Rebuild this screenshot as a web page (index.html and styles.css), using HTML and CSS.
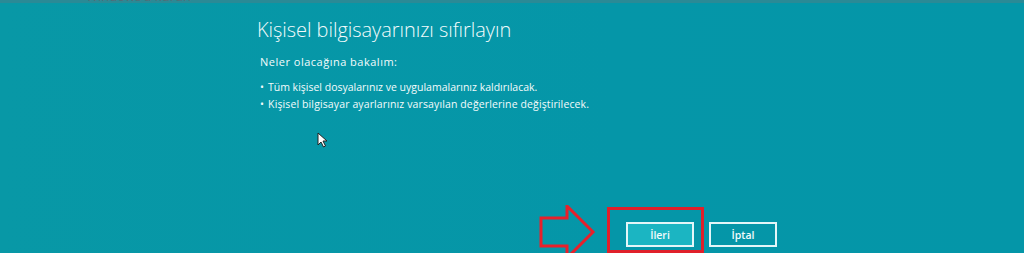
FILE: index.html
```html
<!DOCTYPE html>
<html lang="tr">
<head>
<meta charset="utf-8">
<link rel="stylesheet" href="styles.css">
</head>
<body>
<div class="screen">
  <div class="topstrip"><span class="toptext">Windows’u kurun</span></div>
  <main class="content">
    <h1 class="title">Kişisel bilgisayarınızı sıfırlayın</h1>
    <p class="intro">Neler olacağına bakalım:</p>
    <ul class="list">
      <li>Tüm kişisel dosyalarınız ve uygulamalarınız kaldırılacak.</li>
      <li>Kişisel bilgisayar ayarlarınız varsayılan değerlerine değiştirilecek.</li>
    </ul>
  </main>
  <div class="actions">
    <button class="btn btn-primary">İleri</button>
    <button class="btn">İptal</button>
  </div>
  <svg class="cursor" width="12" height="16" viewBox="0 0 12 16">
    <path d="M1 1 L1 13 L4 10 L6.5 15 L8.5 14 L6 9 L10 9 Z" fill="#fff" stroke="#222" stroke-width="1"/>
  </svg>
  <svg class="arrow" width="60" height="56" viewBox="0 0 60 56">
    <path d="M2 13 L28 13 L28 1 L54 27 L28 53 L28 41 L2 41 Z" fill="none" stroke="#e8202a" stroke-width="3" stroke-linejoin="miter"/>
  </svg>
  <div class="highlight"></div>
</div>
</body>
</html>
```

FILE: styles.css
```css
* { box-sizing: border-box; }
html, body { margin: 0; padding: 0; }
body {
  width: 1024px;
  height: 253px;
  overflow: hidden;
  background: #0596a8;
  font-family: "Open Sans", "Noto Sans", sans-serif;
  color: #f4fbfc;
}
.screen {
  position: relative;
  width: 1024px;
  height: 253px;
  display: flex;
  flex-direction: column;
  background: linear-gradient(90deg, #0898a6 0%, #0596a8 60%, #0496a8 100%);
}
.topstrip {
  height: 3px;
  background: #2a8a96;
  position: relative;
  overflow: hidden;
}
.toptext {
  position: absolute;
  left: 86px;
  top: -10px;
  font-size: 13px;
  color: #4e6e78;
  line-height: 13px;
}
.content {
  padding: 14px 0 0 257px;
}
.title {
  margin: 0;
  font-weight: 300;
  font-size: 20px;
  line-height: 26px;
  letter-spacing: -0.05px;
  color: #f2fbfc;
}
.intro {
  margin: 12px 0 0 3px;
  font-size: 11px;
  line-height: 14px;
  letter-spacing: 0.5px;
}
.list {
  list-style: none;
  margin: 10px 0 0 3px;
  padding: 0;
  font-size: 10.5px;
  line-height: 17px;
}
.list li::before {
  content: "•";
  margin-right: 4px;
}
.list li + li {
  letter-spacing: 0.12px;
}
.actions {
  margin-top: auto;
  display: flex;
  gap: 15px;
  padding: 0 0 6px 626px;
}
.btn {
  width: 68px;
  height: 25px;
  border: 2px solid #e4f6f8;
  background: transparent;
  color: #f2fbfc;
  font-family: "Open Sans", "Noto Sans", sans-serif;
  font-size: 10.5px;
  font-weight: 600;
  padding: 0;
}
.btn-primary {
  background: #1bb5c2;
}
.cursor {
  position: absolute;
  left: 317px;
  top: 132px;
}
.arrow {
  position: absolute;
  left: 539px;
  top: 205px;
}
.highlight {
  position: absolute;
  left: 607px;
  top: 207px;
  width: 97px;
  height: 46px;
  border: 3px solid #e0202a;
}
```
